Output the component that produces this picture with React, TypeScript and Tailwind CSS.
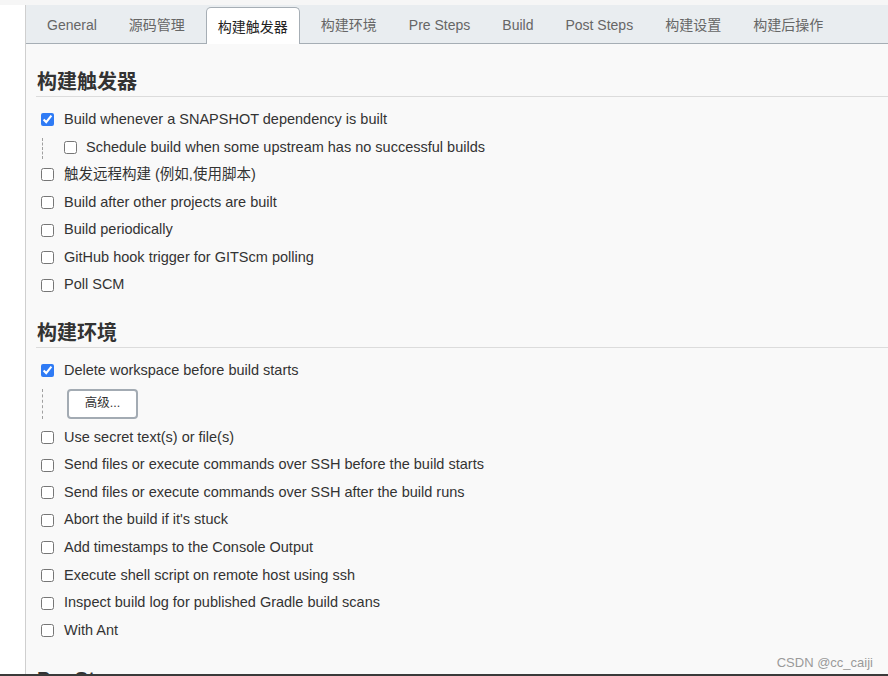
import React from 'react';

const tabs = ['General', '源码管理', '构建触发器', '构建环境', 'Pre Steps', 'Build', 'Post Steps', '构建设置', '构建后操作'];

const font = { fontFamily: '"Liberation Sans", "Noto Sans CJK SC", sans-serif' };

function Check({ label, checked = false }: { label: string; checked?: boolean }) {
    return (
        <div className="flex items-center h-[27.6px] pl-[5px]">
            <input
                type="checkbox"
                checked={checked}
                readOnly
                className="w-[13px] h-[13px] m-0 accent-[#2f7bf5]"
            />
            <span className="ml-[10px] text-[14.5px] text-[#333]">{label}</span>
        </div>
    );
}

function Heading({ title, className = '' }: { title: string; className?: string }) {
    return (
        <h2 className={`text-[20px] leading-[28px] font-bold text-[#333] border-b border-[#dcdcdc] pl-[1px] ${className}`}>
            {title}
        </h2>
    );
}

export default function App() {
    const active = '构建触发器';

    return (
        <div className="w-[888px] h-[676px] overflow-hidden bg-[#f6f6f6] flex flex-col" style={font}>
            <div className="h-[5px] shrink-0"></div>
            <div className="flex flex-1 min-h-0">
                <div className="w-[26px] shrink-0 bg-white border-r border-[#cfcfcf]"></div>
                <div className="flex-1 min-w-0 bg-[#f9f9f9] overflow-hidden">
                    <div className="h-[39px] bg-[#e9edf0] border-b border-[#a6aeb5] flex items-end pl-[10px] gap-[10px]">
                        {tabs.map((t) =>
                            t === active ? (
                                <div
                                    key={t}
                                    className="h-[37px] -mb-px px-[11px] pt-[2px] flex items-center bg-white border border-b-0 border-[#a6aeb5] rounded-t-[5px] text-[14px] text-[#222]"
                                >
                                    {t}
                                </div>
                            ) : (
                                <div key={t} className="h-[37px] px-[11px] pt-[2px] flex items-center text-[14px] text-[#666]">
                                    {t}
                                </div>
                            )
                        )}
                    </div>

                    <div className="pl-[10px]">
                        <Heading title="构建触发器" className="mt-[24px]" />
                        <div className="pt-[9px]">
                            <Check label="Build whenever a SNAPSHOT dependency is built" checked />
                            <div className="flex h-[27.6px] pl-[6px]">
                                <div className="mt-[4px] mb-[2px] border-l border-dashed border-[#a0a0a0]"></div>
                                <div className="flex items-center pl-[21px]">
                                    <input type="checkbox" readOnly className="w-[13px] h-[13px] m-0 accent-[#2f7bf5]" />
                                    <span className="ml-[9px] text-[14.5px] text-[#333]">
                                        Schedule build when some upstream has no successful builds
                                    </span>
                                </div>
                            </div>
                            <Check label="触发远程构建 (例如,使用脚本)" />
                            <Check label="Build after other projects are built" />
                            <Check label="Build periodically" />
                            <Check label="GitHub hook trigger for GITScm polling" />
                            <Check label="Poll SCM" />
                        </div>

                        <Heading title="构建环境" className="mt-[20px]" />
                        <div className="pt-[9px]">
                            <Check label="Delete workspace before build starts" checked />
                            <div className="flex pl-[6px] mt-[4px] mb-[5px]">
                                <div className="border-l border-dashed border-[#a0a0a0]"></div>
                                <div className="pl-[24px]">
                                    <button className="block w-[71px] h-[30px] bg-white border-2 border-[#a3abb3] rounded-[4px] text-[12.5px] text-[#333]">
                                        高级...
                                    </button>
                                </div>
                            </div>
                            <Check label="Use secret text(s) or file(s)" />
                            <Check label="Send files or execute commands over SSH before the build starts" />
                            <Check label="Send files or execute commands over SSH after the build runs" />
                            <Check label="Abort the build if it's stuck" />
                            <Check label="Add timestamps to the Console Output" />
                            <Check label="Execute shell script on remote host using ssh" />
                            <Check label="Inspect build log for published Gradle build scans" />
                            <Check label="With Ant" />
                        </div>

                        <div className="relative">
                            <Heading title="Pre Steps" className="mt-[20px]" />
                            <div className="absolute right-[15px] -top-[12px] text-[13px] text-[#9a9a9a]">CSDN @cc_caiji</div>
                        </div>
                    </div>
                </div>
            </div>
            <div className="h-[2px] shrink-0 bg-[#3a3a3a]"></div>
        </div>
    );
}
